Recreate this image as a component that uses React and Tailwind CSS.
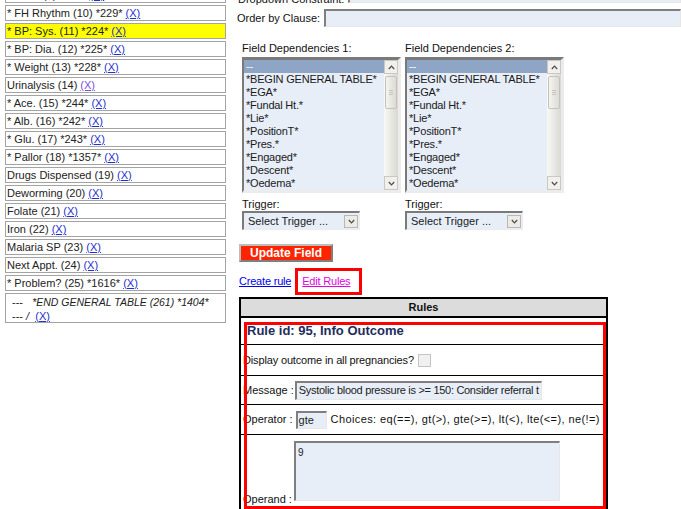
import React from "react";

function Chevron({ up }) {
  return (
    <svg width="7" height="5" viewBox="0 0 7 5">
      <path
        d={up ? "M0.8 4 L3.5 1.2 L6.2 4" : "M0.8 1 L3.5 3.8 L6.2 1"}
        stroke="#4a4a4a"
        strokeWidth="1.2"
        fill="none"
      />
    </svg>
  );
}

function Scrollbar() {
  return (
    <div className="flex flex-col w-[14px] bg-[linear-gradient(to_right,#f8f8f6,#d9d8d2)]">
      <div className="h-[14px] border border-[#c9c8c2] bg-[#f1f0ec] flex items-center justify-center">
        <Chevron up />
      </div>
      <div className="mt-[2px] h-[33px] mx-[1px] rounded-[2px] border border-[#c3c2bb] bg-[linear-gradient(to_right,#f4f4f1,#dcdbd5)] flex flex-col items-center justify-center gap-[1px]">
        <div className="w-[4px] h-px bg-[#c4c3bd]" />
        <div className="w-[4px] h-px bg-[#c4c3bd]" />
        <div className="w-[4px] h-px bg-[#c4c3bd]" />
      </div>
      <div className="flex-1" />
      <div className="h-[14px] border border-[#c9c8c2] bg-[#f1f0ec] flex items-center justify-center">
        <Chevron />
      </div>
    </div>
  );
}

const depItems = [
  "--",
  "*BEGIN GENERAL TABLE*",
  "*EGA*",
  "*Fundal Ht.*",
  "*Lie*",
  "*PositionT*",
  "*Pres.*",
  "*Engaged*",
  "*Descent*",
  "*Oedema*",
];

function ListBox() {
  return (
    <div className="flex w-[159px] h-[136px] border-t-[3px] border-l-[2px] border-r-[3px] border-b-[3px] border-t-[#7a7a7a] border-l-[#7a7a7a] border-r-[#ececec] border-b-[#ececec] bg-[#e8eef8]">
      <div className="flex-1 flex flex-col overflow-hidden">
        {depItems.map((it, i) => (
          <div
            key={i}
            className={
              i === 0
                ? "h-[13px] leading-[13px] pl-[2px] text-[11px] tracking-[-0.2px] whitespace-nowrap bg-[#8ea5c6] text-white"
                : "h-[13px] leading-[13px] pl-[2px] text-[11px] tracking-[-0.2px] whitespace-nowrap text-[#1a1a1a]"
            }
          >
            {it}
          </div>
        ))}
      </div>
      <Scrollbar />
    </div>
  );
}

function TriggerSelect() {
  return (
    <div className="flex items-center w-[118px] h-[19px] border-t-2 border-l-2 border-t-[#7a7a7a] border-l-[#7a7a7a] border-r border-b border-r-[#ececec] border-b-[#ececec] bg-[#e8eef8] pl-[4px]">
      <span className="flex-1 text-[11px] text-[#1a1a1a] whitespace-nowrap">Select Trigger ...</span>
      <div className="w-[14px] h-[13px] mr-[1px] border border-[#b8b7b0] bg-[#ecebe6] flex items-center justify-center">
        <Chevron />
      </div>
    </div>
  );
}

const leftItems = [
  { t: "* Pres. (9) *231* " },
  { t: "* FH Rhythm (10) *229* " },
  { t: "* BP: Sys. (11) *224* ", y: true },
  { t: "* BP: Dia. (12) *225* " },
  { t: "* Weight (13) *228* " },
  { t: "Urinalysis (14) ", v: true },
  { t: "* Ace. (15) *244* " },
  { t: "* Alb. (16) *242* " },
  { t: "* Glu. (17) *243* " },
  { t: "* Pallor (18) *1357* " },
  { t: "Drugs Dispensed (19) " },
  { t: "Deworming (20) " },
  { t: "Folate (21) " },
  { t: "Iron (22) " },
  { t: "Malaria SP (23) " },
  { t: "Next Appt. (24) " },
  { t: "* Problem? (25) *1616* " },
];

const inputCls =
  "border-t-2 border-l-2 border-t-[#7f7f7f] border-l-[#7f7f7f] border-r border-b border-r-[#e6e6e6] border-b-[#e6e6e6] bg-[#e8eef8]";

export default function App() {
  return (
    <div className="w-[681px] h-[509px] overflow-hidden bg-white flex font-['Liberation_Sans',Arial,sans-serif] text-[11px] text-[#111]">
      {/* Left column */}
      <div className="w-[232px] shrink-0 pl-[5px] mt-[-13px] flex flex-col gap-[2px]">
        {leftItems.map((it, i) => (
          <div
            key={i}
            className={
              "w-[221px] h-[16px] border border-[#a3a3a3] leading-[14px] pl-[1px] whitespace-nowrap text-[#222] " +
              (it.y ? "bg-[#ffff00]" : "bg-white")
            }
          >
            {it.t}
            <a className={it.v ? "underline text-[#7a52d6]" : "underline text-[#1f2fd0]"}>(X)</a>
          </div>
        ))}
        <div className="w-[221px] h-[30px] border border-[#a3a3a3] leading-[14px] pl-[6px] pt-px text-[#222] whitespace-nowrap">
          <div>
            ---&nbsp;&nbsp; <i className="text-[10.5px]">*END GENERAL TABLE (261) *1404*</i>
          </div>
          <div>
            --- <i>/</i>&nbsp; <a className="underline text-[#1f2fd0]">(X)</a>
          </div>
        </div>
      </div>

      {/* Right column */}
      <div className="flex-1 flex flex-col mt-[-15px] min-w-0">
        <div className="flex items-end h-[18px]">
          <span className="w-[110px] ml-[6px] mb-[-3px] leading-[13px] shrink-0 whitespace-nowrap">Dropdown Constraint:</span>
          <div className={"h-[18px] flex-1 " + inputCls} />
        </div>
        <div className="flex items-center h-[18px] mt-[6px]">
          <span className="w-[87px] ml-[5px] shrink-0 whitespace-nowrap">Order by Clause:</span>
          <div className={"h-[18px] flex-1 " + inputCls} />
        </div>

        <div className="flex gap-[4px] ml-[10px] mt-[15px]">
          <div className="flex flex-col">
            <div className="h-[13px] leading-[13px]">Field Dependencies 1:</div>
            <div className="mt-[2px]">
              <ListBox />
            </div>
            <div className="h-[13px] leading-[13px] mt-[5px]">Trigger:</div>
            <TriggerSelect />
          </div>
          <div className="flex flex-col">
            <div className="h-[13px] leading-[13px]">Field Dependencies 2:</div>
            <div className="mt-[2px]">
              <ListBox />
            </div>
            <div className="h-[13px] leading-[13px] mt-[5px]">Trigger:</div>
            <TriggerSelect />
          </div>
        </div>

        <div className="ml-[7px] mt-[14px] w-[94px] h-[18px] border-2 border-t-[#bdbdbd] border-l-[#bdbdbd] border-r-[#7f7f7f] border-b-[#7f7f7f] bg-[#ff2400] text-white font-bold text-[12px] leading-[14px] flex items-center justify-center">
          Update Field
        </div>

        <div className="ml-[7px] mt-[6px] h-[27px] flex items-center">
          <a className="underline text-[#0000ee] tracking-[-0.2px]">Create rule</a>
          <span className="ml-[4px] h-[27px] w-[67px] border-[3px] border-[#ff0000] pl-[4px] flex items-center">
            <a className="underline text-[#e000e0] tracking-[-0.2px] whitespace-nowrap">Edit Rules</a>
          </span>
        </div>

        <div className="relative ml-[7px] mt-[2px] w-[369px] border-2 border-b-0 border-black">
          <div className="h-[19px] bg-[#dcdcdc] border-b-2 border-black text-center font-bold leading-[17px] text-[11px]">
            Rules
          </div>
          <div className="h-[27px] border-b border-black pl-[6px] flex items-center text-[13px] font-bold text-[#1e2d5c]">
            Rule id: 95, Info Outcome
          </div>
          <div className="h-[31px] border-b border-black pl-[2px] flex items-center">
            <span className="tracking-[-0.15px] whitespace-nowrap">Display outcome in all pregnancies?</span>
            <div className="ml-[4px] w-[13px] h-[13px] border border-[#c4c4c4] bg-[#f0f0f0]" />
          </div>
          <div className="h-[29px] border-b border-black pl-[2px] flex items-center">
            <span className="whitespace-nowrap">Message :</span>
            <div className={"ml-[1px] w-[247px] h-[19px] pl-[2px] leading-[15px] tracking-[-0.3px] whitespace-nowrap overflow-hidden text-[#222] " + inputCls}>
              Systolic blood pressure is &gt;= 150: Consider referral t
            </div>
          </div>
          <div className="h-[30px] border-b border-black pl-[2px] flex items-center">
            <span className="whitespace-nowrap">Operator :</span>
            <div className={"ml-[3px] w-[31px] h-[18px] pl-[1px] leading-[14px] text-[#222] " + inputCls}>gte</div>
            <span className="ml-[4px] whitespace-nowrap tracking-[0.4px]">Choices: eq(==), gt(&gt;), gte(&gt;=), lt(&lt;), lte(&lt;=), ne(!=)</span>
          </div>
          <div className="h-[80px] pl-[2px] pt-[6px] flex items-start">
            <span className="whitespace-nowrap mt-[50px]">Operand :</span>
            <div className={"ml-[2px] w-[266px] h-[60px] pl-[2px] pt-[3px] leading-[13px] text-[10px] text-[#222] " + inputCls}>9</div>
          </div>
          <div className="absolute left-[3px] top-[23px] w-[362px] h-[187px] border-[3px] border-[#ff0000] pointer-events-none" />
        </div>
      </div>
    </div>
  );
}
